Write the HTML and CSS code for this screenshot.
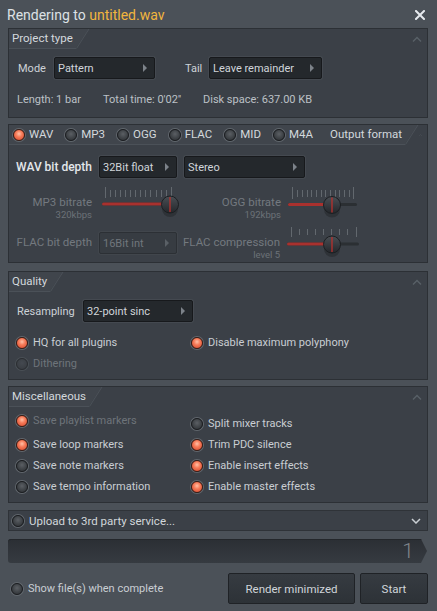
FILE: index.html
```html
<!DOCTYPE html>
<html>
<head>
<meta charset="utf-8">
<link rel="stylesheet" href="styles.css">
</head>
<body>
<div class="win">
  <div class="titlebar">
    <span class="title">Rendering to <span class="fname">untitled.wav</span></span>
    <svg class="close" width="10" height="10" viewBox="0 0 10 10"><path d="M1 1L9 9M9 1L1 9" stroke="#e6eaee" stroke-width="2" stroke-linecap="square"/></svg>
  </div>

  <section class="panel p1">
    <div class="phead">
      <div class="tab"><div class="tab-lbl">Project type</div><svg class="slant" width="14" height="20" viewBox="0 0 14 20"><polygon points="0,0 13,0 0,19" fill="#40454c"/><line x1="13" y1="0" x2="0.5" y2="19.5" stroke="#4b5158" stroke-width="1"/></svg></div>
      <svg class="chev" width="10" height="6" viewBox="0 0 10 6"><polyline points="1,5.5 5,1.5 9,5.5" fill="none" stroke="#596067" stroke-width="1.4"/></svg>
    </div>
    <div class="body1">
      <div class="moderow">
        <span class="lbl mode-l">Mode</span>
        <div class="dd dd-pattern">Pattern</div>
        <span class="lbl tail-l">Tail</span>
        <div class="dd dd-tail">Leave remainder</div>
      </div>
      <div class="info">
        <span class="i1">Length: 1 bar</span>
        <span class="i2">Total time: 0'02''</span>
        <span class="i3">Disk space: 637.00 KB</span>
      </div>
    </div>
  </section>

  <section class="panel p2">
    <div class="phead">
      <div class="tab"><div class="tab-lbl fmt">
        <span class="opt"><i class="rb on"></i>WAV</span>
        <span class="opt"><i class="rb"></i>MP3</span>
        <span class="opt"><i class="rb"></i>OGG</span>
        <span class="opt"><i class="rb"></i>FLAC</span>
        <span class="opt"><i class="rb"></i>MID</span>
        <span class="opt"><i class="rb"></i>M4A</span>
        <span class="fmt-t">Output format</span>
      </div><svg class="slant" width="14" height="20" viewBox="0 0 14 20"><polygon points="0,0 13,0 0,19" fill="#40454c"/><line x1="13" y1="0" x2="0.5" y2="19.5" stroke="#4b5158" stroke-width="1"/></svg></div>
      <svg class="chev" width="10" height="6" viewBox="0 0 10 6"><polyline points="1,5.5 5,1.5 9,5.5" fill="none" stroke="#596067" stroke-width="1.4"/></svg>
    </div>
    <div class="body2">
      <div class="r1">
        <span class="lcol strong">WAV bit depth</span>
        <div class="dd dd-bits">32Bit float</div>
        <div class="dd dd-stereo">Stereo</div>
      </div>
      <div class="r2">
        <div class="lcol lblock dim"><span>MP3 bitrate</span><small>320kbps</small></div>
        <svg class="sl sl-mp3" width="80" height="31" viewBox="0 0 80 31">
          <defs><linearGradient id="k1" x1="0" y1="0" x2="0" y2="1"><stop offset="0" stop-color="#4a4f55"/><stop offset="1" stop-color="#24272b"/></linearGradient></defs>
          <g stroke="#62686e" stroke-width="1">
            <line x1="4.5" y1="0" x2="4.5" y2="11"/><line x1="9.5" y1="3" x2="9.5" y2="10"/><line x1="14.5" y1="3" x2="14.5" y2="10"/><line x1="19.5" y1="3" x2="19.5" y2="10"/><line x1="24.5" y1="3" x2="24.5" y2="10"/><line x1="29.5" y1="3" x2="29.5" y2="10"/><line x1="34.5" y1="3" x2="34.5" y2="10"/><line x1="39.5" y1="3" x2="39.5" y2="10"/><line x1="44.5" y1="3" x2="44.5" y2="10"/><line x1="49.5" y1="3" x2="49.5" y2="10"/><line x1="55.5" y1="3" x2="55.5" y2="10"/><line x1="60.5" y1="3" x2="60.5" y2="10"/><line x1="65.5" y1="3" x2="65.5" y2="10"/><line x1="70.5" y1="0" x2="70.5" y2="11"/>
          </g>
          <rect x="1" y="15.5" width="77" height="3" rx="1.5" fill="#2b2f33"/>
          <rect x="1" y="15.5" width="66" height="3" rx="1.5" fill="#a9312e"/>
          <ellipse cx="69" cy="22" rx="8" ry="8" fill="#000" opacity="0.22"/>
          <circle cx="69" cy="17.5" r="8.5" fill="url(#k1)" stroke="#1c1f22" stroke-width="1"/>
          <line x1="69" y1="10" x2="69" y2="25" stroke="#b8312d" stroke-width="1.3"/>
        </svg>
        <div class="lblock dim ogg-l"><span>OGG bitrate</span><small>192kbps</small></div>
        <svg class="sl sl-ogg" width="72" height="31" viewBox="0 0 72 31">
          <defs><linearGradient id="k2" x1="0" y1="0" x2="0" y2="1"><stop offset="0" stop-color="#4a4f55"/><stop offset="1" stop-color="#24272b"/></linearGradient></defs>
          <g stroke="#62686e" stroke-width="1">
            <line x1="5.5" y1="0" x2="5.5" y2="12"/><line x1="10.5" y1="3" x2="10.5" y2="10"/><line x1="15.5" y1="3" x2="15.5" y2="10"/><line x1="20.5" y1="3" x2="20.5" y2="10"/><line x1="24.5" y1="3" x2="24.5" y2="10"/><line x1="29.5" y1="3" x2="29.5" y2="10"/><line x1="34.5" y1="3" x2="34.5" y2="10"/><line x1="38.5" y1="3" x2="38.5" y2="10"/><line x1="43.5" y1="3" x2="43.5" y2="10"/><line x1="48.5" y1="3" x2="48.5" y2="10"/><line x1="52.5" y1="3" x2="52.5" y2="10"/><line x1="57.5" y1="3" x2="57.5" y2="10"/><line x1="62.5" y1="3" x2="62.5" y2="10"/><line x1="66.5" y1="0" x2="66.5" y2="12"/>
          </g>
          <rect x="1" y="16" width="69" height="3" rx="1.5" fill="#2b2f33"/>
          <rect x="1" y="16" width="42" height="3" rx="1.5" fill="#a9312e"/>
          <ellipse cx="45" cy="22.5" rx="8" ry="8" fill="#000" opacity="0.22"/>
          <circle cx="45" cy="18" r="8.5" fill="url(#k2)" stroke="#1c1f22" stroke-width="1"/>
          <line x1="45" y1="10.5" x2="45" y2="25.5" stroke="#b8312d" stroke-width="1.3"/>
        </svg>
      </div>
      <div class="r3">
        <span class="lcol dim flac-l">FLAC bit depth</span>
        <div class="dd dis dd-bits">16Bit int</div>
        <div class="lblock dim flacc-l"><span>FLAC compression</span><small>level 5</small></div>
        <svg class="sl sl-flac" width="75" height="31" viewBox="0 0 75 31">
          <defs><linearGradient id="k3" x1="0" y1="0" x2="0" y2="1"><stop offset="0" stop-color="#4a4f55"/><stop offset="1" stop-color="#24272b"/></linearGradient></defs>
          <g stroke="#62686e" stroke-width="1">
            <line x1="5.5" y1="0" x2="5.5" y2="10"/><line x1="13.5" y1="2" x2="13.5" y2="8"/><line x1="21.5" y1="2" x2="21.5" y2="8"/><line x1="29.5" y1="2" x2="29.5" y2="8"/><line x1="37.5" y1="2" x2="37.5" y2="8"/><line x1="45.5" y1="2" x2="45.5" y2="8"/><line x1="53.5" y1="2" x2="53.5" y2="8"/><line x1="61.5" y1="2" x2="61.5" y2="8"/><line x1="70.5" y1="0" x2="70.5" y2="10"/>
          </g>
          <rect x="1" y="15.5" width="72" height="3" rx="1.5" fill="#2b2f33"/>
          <rect x="1" y="15.5" width="43" height="3" rx="1.5" fill="#a9312e"/>
          <ellipse cx="46" cy="22" rx="8" ry="8" fill="#000" opacity="0.22"/>
          <circle cx="46" cy="17.5" r="8.5" fill="url(#k3)" stroke="#1c1f22" stroke-width="1"/>
          <line x1="46" y1="10" x2="46" y2="25" stroke="#b8312d" stroke-width="1.3"/>
        </svg>
      </div>
    </div>
  </section>

  <section class="panel p3">
    <div class="phead">
      <div class="tab"><div class="tab-lbl">Quality</div><svg class="slant" width="14" height="20" viewBox="0 0 14 20"><polygon points="0,0 13,0 0,19" fill="#40454c"/><line x1="13" y1="0" x2="0.5" y2="19.5" stroke="#4b5158" stroke-width="1"/></svg></div>
      <svg class="chev" width="10" height="6" viewBox="0 0 10 6"><polyline points="1,5.5 5,1.5 9,5.5" fill="none" stroke="#596067" stroke-width="1.4"/></svg>
    </div>
    <div class="body3">
      <div class="resrow">
        <span class="lbl res-l">Resampling</span>
        <div class="dd dd-res">32-point sinc</div>
      </div>
      <div class="grid2 q">
        <span class="opt"><i class="rb on"></i>HQ for all plugins</span>
        <span class="opt"><i class="rb on"></i>Disable maximum polyphony</span>
        <span class="opt off"><i class="rb dis"></i>Dithering</span>
      </div>
    </div>
  </section>

  <section class="panel p4">
    <div class="phead">
      <div class="tab"><div class="tab-lbl">Miscellaneous</div><svg class="slant" width="14" height="20" viewBox="0 0 14 20"><polygon points="0,0 13,0 0,19" fill="#40454c"/><line x1="13" y1="0" x2="0.5" y2="19.5" stroke="#4b5158" stroke-width="1"/></svg></div>
      <svg class="chev" width="10" height="6" viewBox="0 0 10 6"><polyline points="1,5.5 5,1.5 9,5.5" fill="none" stroke="#596067" stroke-width="1.4"/></svg>
    </div>
    <div class="grid2 misc">
      <span class="opt off up"><i class="rb on"></i>Save playlist markers</span>
      <span class="opt"><i class="rb"></i>Split mixer tracks</span>
      <span class="opt"><i class="rb on"></i>Save loop markers</span>
      <span class="opt"><i class="rb on"></i>Trim PDC silence</span>
      <span class="opt"><i class="rb"></i>Save note markers</span>
      <span class="opt"><i class="rb on"></i>Enable insert effects</span>
      <span class="opt"><i class="rb"></i>Save tempo information</span>
      <span class="opt"><i class="rb on"></i>Enable master effects</span>
    </div>
  </section>

  <div class="upload">
    <span class="opt"><i class="rb"></i>Upload to 3rd party service...</span>
    <svg class="chevd" width="10" height="6" viewBox="0 0 10 6"><polyline points="1,1 5,5 9,1" fill="none" stroke="#c9ced3" stroke-width="1.5"/></svg>
  </div>

  <div class="progress"><span class="pnum">1</span></div>

  <div class="bottom">
    <span class="opt"><i class="rb"></i>Show file(s) when complete</span>
    <div class="btns">
      <div class="btn b-min">Render minimized</div>
      <div class="btn b-start">Start</div>
    </div>
  </div>
</div>
</body>
</html>
```

FILE: styles.css
```css
* { box-sizing: border-box; }
html, body { margin: 0; padding: 0; }
body {
  width: 437px;
  height: 611px;
  overflow: hidden;
  background: #4b5158;
  font-family: Roboto, "Liberation Sans", Arial, sans-serif;
  font-size: 11px;
  color: #c9ced3;
}
.win { padding: 0 9px 0 8px; }

.titlebar {
  height: 28px;
  display: flex;
  align-items: center;
  justify-content: space-between;
  padding-top: 2px;
}
.title { font-size: 14px; color: #dde1e5; margin-left: -1px; }
.fname { color: #f2b53e; }
.close { margin-right: 3px; margin-top: -1px; }

.panel { background: #3b4047; border: 1px solid #2c3035; }
.p1 { height: 90px; }
.p2 { height: 139px; margin-top: 6px; }
.p3 { height: 109px; margin-top: 8px; }
.p4 { height: 117px; margin-top: 6px; }

.phead { height: 20px; display: flex; align-items: flex-start; justify-content: space-between; }
.tab { display: flex; height: 20px; }
.tab-lbl {
  background: #40454c;
  border-bottom: 1px solid #4b5158;
  height: 20px;
  line-height: 19px;
  padding: 0 3px 0 3px;
  color: #d3d8dc;
  font-size: 11.5px;
  display: flex;
  align-items: center;
  white-space: nowrap;
}
.slant { display: block; flex: none; }
.chev { margin: 7px 5px 0 0; }

.lbl { color: #cdd2d7; white-space: nowrap; }
.dd {
  height: 22px;
  background: #24282c;
  border: 1px solid #17191c;
  border-radius: 2px;
  box-shadow: 0 0 0 1px #444950;
  color: #d0d5da;
  padding-left: 3px;
  display: flex;
  align-items: center;
  position: relative;
  flex: none;
  white-space: nowrap;
}
.dd::after {
  content: "";
  position: absolute;
  right: 7px;
  top: 6px;
  border-left: 4px solid #7c8289;
  border-top: 4px solid transparent;
  border-bottom: 4px solid transparent;
}
.dd.dis { background: #373c42; border-color: #2c3035; box-shadow: 0 0 0 1px #41464c; color: #70767c; }
.dd.dis::after { border-left-color: #5a6066; }

/* panel 1 */
.body1 { padding: 8px 0 0 9px; }
.moderow { display: flex; align-items: center; height: 22px; }
.mode-l { width: 36px; }
.dd-pattern { width: 101px; }
.tail-l { width: 24px; margin-left: 30px; }
.dd-tail { width: 113px; }
.info { display: flex; margin-top: 14px; line-height: 14px; color: #bcc1c6; white-space: nowrap; }
.i1 { width: 86px; margin-left: -1px; }
.i2 { width: 100px; }

/* radios */
.opt { display: flex; align-items: center; gap: 5px; white-space: nowrap; }
.rb {
  width: 12px; height: 12px;
  border-radius: 50%;
  flex: none;
  background: radial-gradient(circle at 50% 40%, #5b5f64 0, #3e4246 55%, #2c2f33 100%);
  border: 1px solid #1b1d20;
  box-shadow: 0 0 0 1px #61676d;
}
.rb.on {
  background: radial-gradient(circle at 50% 38%, #ffc0a6 0, #f67a58 40%, #d2462b 100%);
  border-color: #3a1d16;
}
.rb.dis { background: radial-gradient(circle at 50% 40%, #444950 0, #363a3f 100%); border-color: #2b2e32; box-shadow: 0 0 0 1px #4a5056; }
.off { color: #6e747a; }

/* panel 2 */
.fmt { width: 396px; gap: 12px; padding-left: 4px; font-size: 11.5px; }
.fmt .opt { gap: 4px; }
.fmt-t { margin-left: auto; }
.body2 { padding-top: 11px; }
.lcol { width: 83px; text-align: right; flex: none; white-space: nowrap; }
.strong { color: #e3e7eb; font-weight: 500; font-size: 12px; }
.dim { color: #73797f; }
.r1 { display: flex; align-items: center; height: 22px; }
.dd-bits { width: 78px; margin-left: 7px; }
.dd-stereo { width: 121px; margin-left: 7px; }
.r2 { display: flex; align-items: flex-start; margin-top: 9px; height: 31px; }
.lblock { display: flex; flex-direction: column; align-items: flex-end; line-height: 14px; margin-top: 8px; flex: none; white-space: nowrap; font-size: 11.5px; }
.lblock small { font-size: 9.5px; line-height: 12px; color: #6c7278; }
.sl { display: block; flex: none; }
.sl-mp3 { margin-left: 9px; }
.ogg-l { width: 100px; }
.sl-ogg { margin-left: 6px; margin-top: 0; }
.r3 { display: flex; align-items: flex-start; margin-top: 9px; height: 31px; }
.r3 .dd { margin-top: 5px; }
.flac-l { margin-top: 8px; line-height: 14px; font-size: 11.5px; }
.flacc-l { width: 96px; margin-left: 7px; margin-top: 8px; }
.sl-flac { margin-left: 6px; margin-top: 0; }

/* panel 3 */
.body3 { padding-top: 8px; }
.resrow { display: flex; align-items: center; height: 22px; padding-left: 8px; }
.res-l { width: 66px; }
.dd-res { width: 110px; }
.grid2 { display: grid; grid-template-columns: 175px 1fr; grid-auto-rows: 21px; padding-left: 7px; align-items: center; }
.q { margin-top: 10px; }
.misc { padding-top: 6px; }
.misc .up { margin-top: -6px; }

.upload {
  margin-top: 7px;
  height: 21px;
  background: #3b4047;
  border: 1px solid #2f3338;
  display: flex;
  align-items: center;
  justify-content: space-between;
  padding: 0 6px 0 3px;
  color: #d2d7db;
  font-size: 11.5px;
}

.progress {
  margin-top: 8px;
  height: 24px;
  width: 419px;
  background: linear-gradient(#2b2f34, #363b41);
  border-radius: 3px 0 0 3px;
  clip-path: polygon(0 0, calc(100% - 6px) 0, 100% 50%, calc(100% - 6px) 100%, 0 100%);
  display: flex;
  align-items: center;
  justify-content: flex-end;
  padding-right: 13px;
  box-shadow: inset 0 1px 0 #24272b;
}
.pnum { font-size: 21px; font-weight: 300; color: #80868c; line-height: 24px; }

.bottom { margin-top: 10px; height: 31px; display: flex; align-items: center; justify-content: space-between; padding-left: 3px; }
.btns { display: flex; gap: 5px; height: 31px; }
.btn {
  height: 31px;
  display: flex;
  align-items: center;
  justify-content: center;
  background: linear-gradient(#363b41, #2d3237);
  border: 1px solid #1f2226;
  border-radius: 2px;
  color: #d0d5da;
  font-size: 11.5px;
}
.b-min { width: 127px; }
.b-start { width: 68px; }
```
